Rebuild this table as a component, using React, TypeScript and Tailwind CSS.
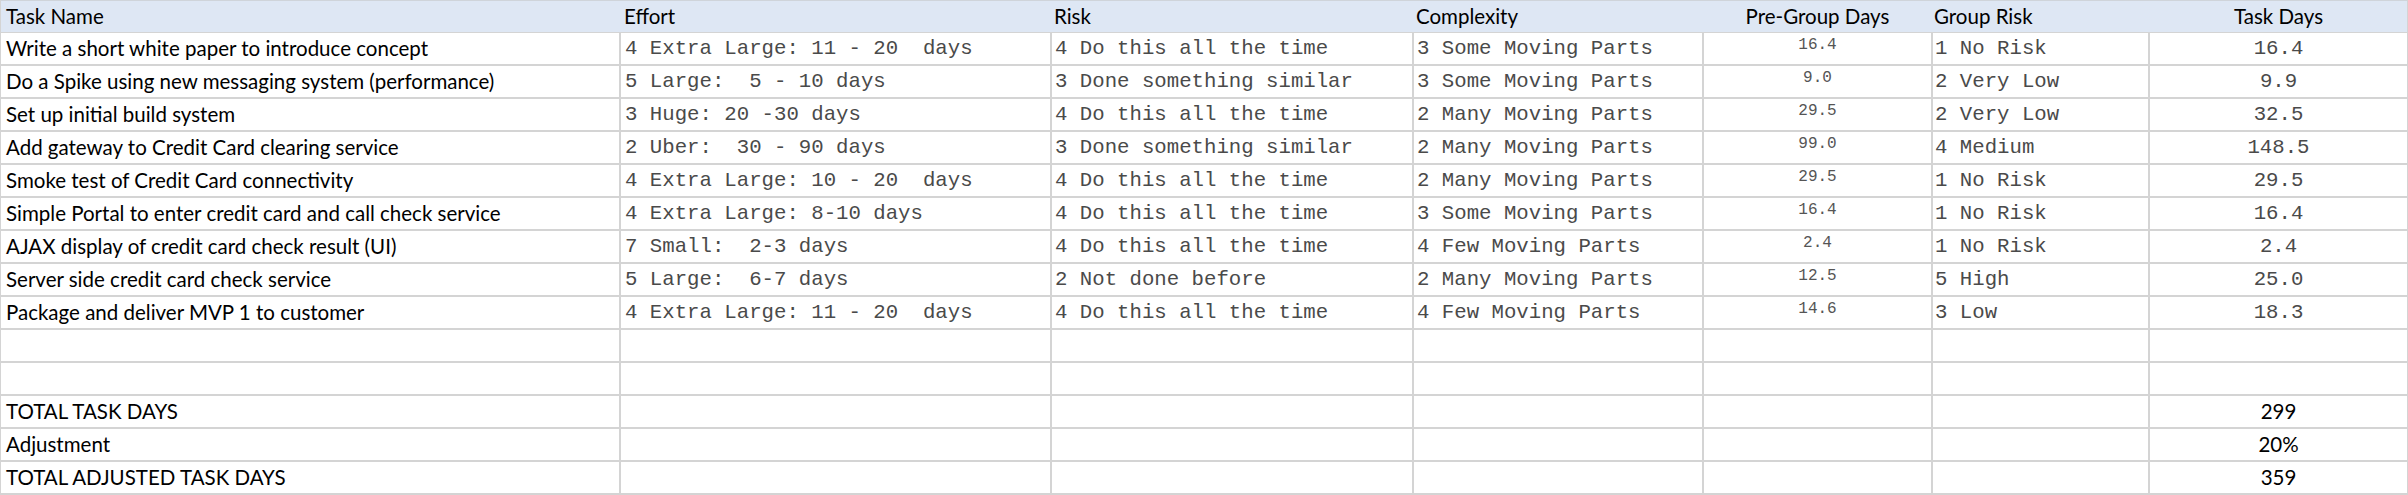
const cols = "grid-cols-[618px_429px_360px_288px_227px_215px_1fr]";

type Row = {
  name: string;
  effort: string;
  risk: string;
  complexity: string;
  pre: string;
  group: string;
  days: string;
};

const rows: Row[] = [
  { name: "Write a short white paper to introduce concept", effort: "4 Extra Large: 11 - 20  days", risk: "4 Do this all the time", complexity: "3 Some Moving Parts", pre: "16.4", group: "1 No Risk", days: "16.4" },
  { name: "Do a Spike using new messaging system (performance)", effort: "5 Large:  5 - 10 days", risk: "3 Done something similar", complexity: "3 Some Moving Parts", pre: "9.0", group: "2 Very Low", days: "9.9" },
  { name: "Set up initial build system", effort: "3 Huge: 20 -30 days", risk: "4 Do this all the time", complexity: "2 Many Moving Parts", pre: "29.5", group: "2 Very Low", days: "32.5" },
  { name: "Add gateway to Credit Card clearing service", effort: "2 Uber:  30 - 90 days", risk: "3 Done something similar", complexity: "2 Many Moving Parts", pre: "99.0", group: "4 Medium", days: "148.5" },
  { name: "Smoke test of Credit Card connectivity", effort: "4 Extra Large: 10 - 20  days", risk: "4 Do this all the time", complexity: "2 Many Moving Parts", pre: "29.5", group: "1 No Risk", days: "29.5" },
  { name: "Simple Portal to enter credit card and call check service", effort: "4 Extra Large: 8-10 days", risk: "4 Do this all the time", complexity: "3 Some Moving Parts", pre: "16.4", group: "1 No Risk", days: "16.4" },
  { name: "AJAX display of credit card check result (UI)", effort: "7 Small:  2-3 days", risk: "4 Do this all the time", complexity: "4 Few Moving Parts", pre: "2.4", group: "1 No Risk", days: "2.4" },
  { name: "Server side credit card check service", effort: "5 Large:  6-7 days", risk: "2 Not done before", complexity: "2 Many Moving Parts", pre: "12.5", group: "5 High", days: "25.0" },
  { name: "Package and deliver MVP 1 to customer", effort: "4 Extra Large: 11 - 20  days", risk: "4 Do this all the time", complexity: "4 Few Moving Parts", pre: "14.6", group: "3 Low", days: "18.3" },
];

const totals = [
  { label: "TOTAL TASK DAYS", value: "299" },
  { label: "Adjustment", value: "20%" },
  { label: "TOTAL ADJUSTED TASK DAYS", value: "359" },
];

const sans = "font-['Lato','Liberation_Sans',sans-serif] text-[20.5px] text-black";
const mono = "font-['Liberation_Mono','Courier_New',monospace] text-[20.7px] text-[#4a4a4a] whitespace-pre";

function Cell({ children, className = "" }: { children?: React.ReactNode; className?: string }) {
  return <div className={`bg-white h-[31px] flex items-center overflow-hidden ${className}`}>{children}</div>;
}

export default function App() {
  return (
    <div className="w-[2408px] h-[495px] bg-[#d4d4d4] pb-[2px] pl-[1px] pr-[1px] overflow-hidden">
      <div className={`grid ${cols} gap-x-[2px] bg-[#dee7f4] border-t border-[#cfd4da] h-[32px] items-center ${sans}`}>
        <div className="pl-[5px]">Task Name</div>
        <div className="pl-[3px]">Effort</div>
        <div className="pl-[2px]">Risk</div>
        <div className="pl-[2px]">Complexity</div>
        <div className="text-center">Pre-Group Days</div>
        <div className="pl-[1px]">Group Risk</div>
        <div className="text-center">Task Days</div>
      </div>
      <div className={`grid ${cols} gap-[2px] pt-[1px]`}>
        {rows.map((r, i) => (
          <div key={i} className="contents">
            <Cell className={`${sans} pl-[5px]`}>{r.name}</Cell>
            <Cell className={`${mono} pl-[4px]`}>{r.effort}</Cell>
            <Cell className={`${mono} pl-[3px]`}>{r.risk}</Cell>
            <Cell className={`${mono} pl-[3px]`}>{r.complexity}</Cell>
            <Cell className="justify-center items-start pt-[3px]">
              <span className="font-['Liberation_Mono','Courier_New',monospace] text-[16px] leading-[18px] text-[#555]">{r.pre}</span>
            </Cell>
            <Cell className={`${mono} pl-[2px]`}>{r.group}</Cell>
            <Cell className={`${mono} justify-center`}>{r.days}</Cell>
          </div>
        ))}
        {[0, 1].map((i) => (
          <div key={`b${i}`} className="contents">
            {[0, 1, 2, 3, 4, 5, 6].map((j) => (
              <Cell key={j} />
            ))}
          </div>
        ))}
        {totals.map((t) => (
          <div key={t.label} className="contents">
            <Cell className={`${sans} pl-[5px]`}>{t.label}</Cell>
            <Cell />
            <Cell />
            <Cell />
            <Cell />
            <Cell />
            <Cell className={`${sans} justify-center`}>{t.value}</Cell>
          </div>
        ))}
      </div>
    </div>
  );
}
